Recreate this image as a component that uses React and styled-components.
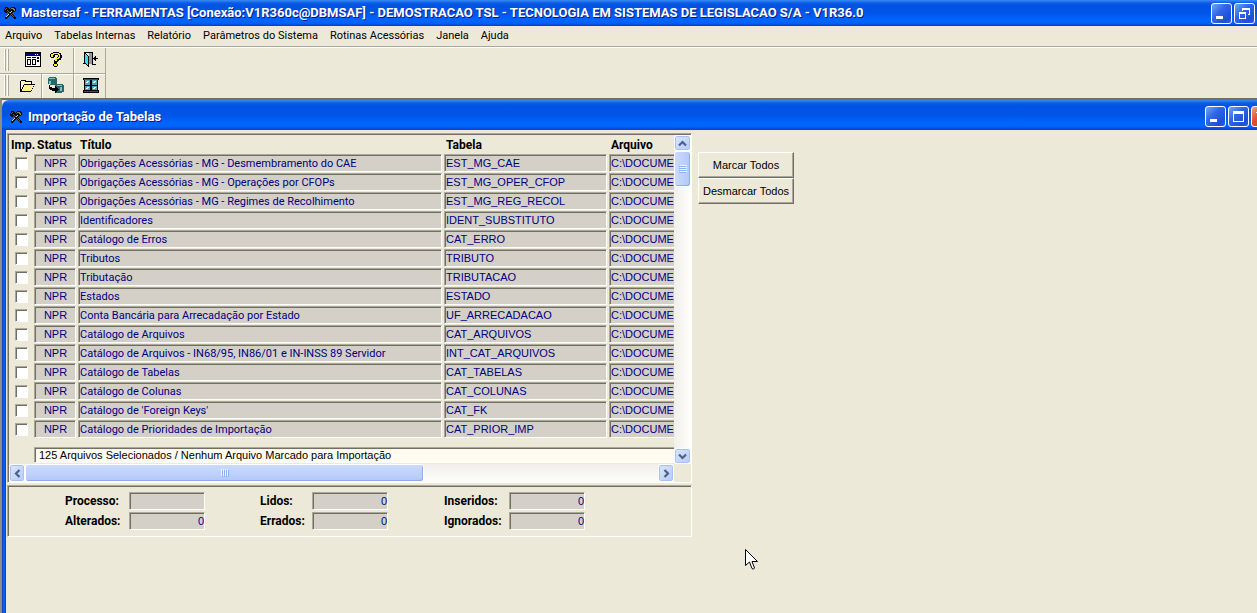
import React, { useState } from 'react';
import styled, { createGlobalStyle } from 'styled-components';

const GlobalStyle = createGlobalStyle`
    * {
        box-sizing: border-box;
    }
    body {
        margin: 0;
        background-color: #ece9d8;
        font-family: "Liberation Sans", Arial, sans-serif;
        font-size: 11px;
        color: #000;
    }
    button, input {
        font: inherit;
        color: inherit;
    }
`;

const Page = styled.div`
    min-height: 100vh;
    display: flex;
    flex-direction: column;
    overflow: hidden;
    position: relative;
    background-color: #ece9d8;
`;

const TitleBar = styled.header`
    height: ${(p) => (p.$child ? '30px' : '26px')};
    display: flex;
    align-items: center;
    gap: ${(p) => (p.$child ? '5px' : '4px')};
    padding: ${(p) => (p.$child ? '3px 5px 0 7px' : '0 2px 0 3px')};
    background: linear-gradient(
        180deg,
        #3a8cf5 0,
        #0a5be8 3px,
        #0053e1 6px,
        #0055e8 50%,
        #0066ff 80%,
        #0060f5 90%,
        #003ecb 100%
    );
    border-radius: ${(p) => (p.$child ? '7px 7px 0 0' : '0')};
`;

const TitleText = styled.h1`
    flex: 1;
    margin: 0;
    font-family: Roboto, sans-serif;
    font-size: 13px;
    line-height: 18px;
    font-weight: 700;
    color: #fff;
    white-space: nowrap;
    text-shadow: 1px 1px 0 #0a1883;
`;

const CaptionButtons = styled.div`
    display: flex;
    gap: 2px;
`;

const CaptionButton = styled.button`
    width: 21px;
    height: 21px;
    padding: 0;
    border: 1px solid #fff;
    border-radius: 3px;
    background: ${(p) =>
        p.$close
            ? 'linear-gradient(135deg, #f0a088, #e0532f 40%, #c63a15)'
            : 'linear-gradient(135deg, #7aa4f5, #3067e6 40%, #1c4fd8 80%, #2a62ea)'};
    display: flex;
    align-items: center;
    justify-content: center;
`;

const MenuBar = styled.nav`
    height: 22px;
    display: flex;
    gap: 12px;
    padding-left: 5px;
    border-bottom: 1px solid #fff;
    box-shadow: inset 0 -1px 0 #aca899;
`;

const MenuItem = styled.a`
    font-family: Roboto, sans-serif;
    font-size: 11px;
    line-height: 20px;
    color: #000;
    text-decoration: none;
    white-space: nowrap;
`;

const Toolbars = styled.div`
    align-self: flex-start;
    width: 106px;
    border-right: 1px solid #aca899;
`;

const Toolbar = styled.div`
    height: 25px;
    display: flex;
    padding-left: 4px;
    & + & {
        border-top: 1px solid #aca899;
        box-shadow: inset 0 1px 0 #fff;
    }
`;

const Handle = styled.div`
    width: 5px;
    margin: 1px 0 2px;
    background: linear-gradient(
        90deg,
        #fff 1px,
        #aca899 1px 2px,
        transparent 2px 3px,
        #fff 3px 4px,
        #aca899 4px
    );
`;

const ToolGroup = styled.div`
    flex: ${(p) => (p.$width ? `0 0 ${p.$width}px` : '1')};
    display: flex;
    align-items: center;
    justify-content: ${(p) => (p.$end ? 'flex-end' : 'center')};
    gap: 9px;
    padding: 0 ${(p) => p.$end || 0}px 2px ${(p) => (p.$end ? 0 : 2)}px;
    & + & {
        border-left: 1px solid #aca899;
        box-shadow: inset 1px 0 0 #fff;
    }
`;

const ToolButton = styled.button`
    padding: 0;
    border: none;
    background: none;
    display: flex;
`;

const ChildWindow = styled.section`
    flex: 1;
    width: calc(100% + 20px);
    display: flex;
    flex-direction: column;
    border-top: 2px solid #716f64;
    border-left: 2px solid #8f8d80;
`;

const ChildBody = styled.div`
    flex: 1;
    display: flex;
    align-items: flex-start;
    gap: 6px;
    padding: 3px 5px 0;
    background: linear-gradient(90deg, #0831a8, #0a5bf0 1px 3px, #0831a8) 0 0 / 4px 100% no-repeat;
`;

const Panels = styled.div`
    flex: 0 1 685px;
    min-width: 0;
    display: flex;
    flex-direction: column;
    gap: 2px;
`;

const Panel = styled.div`
    border: 1px solid;
    border-color: #aca899 #fff #fff #aca899;
    box-shadow: inset 1px 1px 0 #716f64;
`;

const ListPanel = styled(Panel)`
    display: grid;
    grid-template-columns: minmax(0, 1fr) 17px;
    grid-template-rows: 329px 18px;
    padding: 1px 0 0 1px;
`;

const TableArea = styled.div`
    overflow: hidden;
    display: flex;
    flex-direction: column;
`;

const Table = styled.table`
    width: 726px;
    table-layout: fixed;
    border-collapse: collapse;
`;

const Th = styled.th`
    height: 19px;
    padding: 1px 0 0 2px;
    font-family: Roboto, sans-serif;
    font-size: 12px;
    line-height: 16px;
    text-align: left;
    &:nth-child(2) {
        padding-left: 3px;
    }
`;

const Td = styled.td`
    height: 19px;
    padding: 0 2px 1px 0;
`;

const sunken = `
    border: 1px solid;
    border-color: #aca899 #fff #fff #aca899;
    box-shadow: inset 1px 1px 0 #716f64;
`;

const Cell = styled.div`
    ${sunken}
    height: 18px;
    padding: 1px 0 0 1px;
    font-family: ${(p) => (p.$text ? 'Roboto, sans-serif' : 'inherit')};
    line-height: 15px;
    background-color: #d4d0c8;
    color: #000080;
    text-align: ${(p) => (p.$center ? 'center' : 'left')};
    white-space: nowrap;
    overflow: hidden;
`;

const Check = styled.input`
    ${sunken}
    appearance: none;
    display: block;
    width: 13px;
    height: 13px;
    margin: 0 0 0 6px;
    background-color: #fff;
    &:checked {
        background: radial-gradient(#000 3px, #fff 4px);
    }
`;

const Summary = styled.input`
    ${sunken}
    border-right: none;
    height: 16px;
    margin: 8px 0 0 25px;
    padding: 0 4px;
    background-color: #fffbf0;
`;

const Scroll = styled.div`
    display: flex;
    flex-direction: ${(p) => (p.$vertical ? 'column' : 'row')};
    background: linear-gradient(${(p) => (p.$vertical ? '90deg' : '180deg')}, #f0efea, #fefefb);
`;

const ScrollButton = styled.button`
    flex: 0 0 16px;
    padding: 0;
    border: 1px solid #fff;
    border-radius: 3px;
    background: linear-gradient(135deg, #dce7ff, #b4caf8);
    box-shadow: inset 0 0 0 1px #a9c1f2;
    display: flex;
    align-items: center;
    justify-content: center;
`;

const Thumb = styled.div`
    flex: 0 0 ${(p) => p.$size};
    border: 1px solid #fff;
    border-radius: 3px;
    background: linear-gradient(${(p) => (p.$vertical ? '90deg' : '180deg')}, #cbdafd, #bdd0fc 60%, #b2c7f7);
    box-shadow: inset -1px -1px 0 #8eaee5;
    display: flex;
    align-items: center;
    justify-content: center;
`;

const Track = styled.div`
    flex: 1;
`;

const StatsPanel = styled(Panel)`
    height: 52px;
    display: grid;
    grid-template-columns: 183px 172px 172px;
    column-gap: 12px;
    row-gap: 2px;
    align-content: start;
    padding: 6px 0 0 57px;
`;

const Stat = styled.div`
    height: 18px;
    display: flex;
    align-items: center;
`;

const StatLabel = styled.label`
    flex: 0 0 ${(p) => p.$width}px;
    font-family: Roboto, sans-serif;
    font-size: 12px;
    font-weight: 700;
`;

const StatInput = styled.input`
    ${sunken}
    width: 76px;
    height: 18px;
    padding: 0;
    background-color: #d4d0c8;
    color: #000080;
    text-align: right;
`;

const Actions = styled.div`
    display: flex;
    flex-direction: column;
    padding-top: 19px;
`;

const ActionButton = styled.button`
    width: 96px;
    height: 26px;
    padding: 0;
    border: 1px solid;
    border-color: #fff #716f64 #716f64 #fff;
    box-shadow: inset -1px -1px 0 #aca899;
    background-color: #ece9d8;
    white-space: nowrap;
`;

const Cursor = styled.svg`
    position: absolute;
    left: 745px;
    top: 549px;
    pointer-events: none;
`;

const Svg = ({ w = 16, h = 16, children }) => (
    <svg width={w} height={h} viewBox={`0 0 ${w} ${h}`} shapeRendering="crispEdges" aria-hidden="true">
        {children}
    </svg>
);

const ToolsIcon = () => (
    <Svg w={14} h={14}>
        <path d="M2 1h3v1h1v1h1v1h1v-1h-1v-1h1v-1h4v1h1v3h-1v1h-2v1h-1v1h1v1h1v1h1v1h1v2h-2v-1h-1v-1h-1v-1h-1v-1h-1v1h-1v1h-1v1h-1v1h-2v-2h1v-1h1v-1h1v-1h1v-1h-1v-1h-1v1h-2v-1h-1v-3h1z" fill="#0c0c14" />
        <path d="M2 3h1v1h-1zM3 2h1v1h-1zM4 4h1v1h-1z" fill="#8a5230" />
        <path d="M8 2h3v1h-3zM10 3h2v2h-1v-1h-1z" fill="#8c8a3a" />
        <path d="M8 5h1v1h-1zM7 6h1v1h-1zM5 8h1v1h-1zM4 9h1v1h-1zM3 10h1v1h-1z" fill="#d8d4c8" />
        <path d="M5 5h1v1h-1zM6 6h1v1h-1zM8 8h1v1h-1zM9 9h1v1h-1zM10 10h1v1h-1z" fill="#b8452c" />
    </Svg>
);

const FormIcon = () => (
    <Svg h={15}>
        <rect width="16" height="15" fill="#000" />
        <rect x="1" y="1" width="14" height="3" fill="#000080" />
        <path d="M10 2h1v1h-1zM12 2h1v1h-1z" fill="#fff" />
        <rect x="1" y="4" width="14" height="10" fill="#fff" />
        <path d="M2 5h4v1h-4zM7 5h4v1h-4zM12 5h2v2h-2zM12 8h2v2h-2z" fill="#000" />
        <path d="M2 7h4v6h-4zM7 7h4v6h-4z" fill="#000" />
        <path d="M3 8h2v4h-2zM8 8h2v4h-2z" fill="#fff" />
    </Svg>
);

const HelpIcon = () => (
    <Svg w={12} h={15}>
        <path d="M3 0h6v1h2v2h1v3h-1v2h-2v1h-1v1h-1v1h-3v-3h1v-1h1v-1h1v-1h1v-2h-3v2h-1v1h-3v-1h-1v-3h1v-1h2zM4 11h3v1h1v2h-1v1h-3v-1h-1v-2h1z" fill="#000" />
        <path d="M3 1h6v1h1v4h-1v1h-2v2h-2v-2h1v-1h2v-1h1v-2h-1v-1h-4v1h-1v2h-2v-3h1zM4 12h3v2h-3z" fill="#ffef20" />
    </Svg>
);

const ExitIcon = () => (
    <Svg h={15}>
        <path d="M0 11h2v1h-2zM1 0h9v12h3v1h-4v-12h-7v11h-1z" fill="#000" />
        <path d="M6 1h3v11h-3z" fill="#999" />
        <path d="M2 1h1v1h1v1h1v1h1v11h-1v-1h-1v-1h-1v-1h-1z" fill="#000" />
        <path d="M2 2h1v1h1v1h1v9h-1v-1h-1v-1h-1z" fill="#30e0e8" />
        <path d="M10 6h1v-1h1v-1h1v2h2v1h-2v2h-1v-1h-1v-1h-1z" fill="#000" />
    </Svg>
);

const FolderIcon = () => (
    <Svg h={13}>
        <path d="M1 1h5v1h6v3h3v1h-1v2h-1v2h-1v2h-1v1h-11v-11h1z" fill="#000" />
        <path d="M1 2h4v1h6v2h-7v1h-1v2h-1v2h-1z" fill="#fffbc0" />
        <path d="M4 6h10v1h-1v2h-1v2h-1v1h-9v-2h1v-2h1z" fill="#fff38a" />
    </Svg>
);

const DatabaseIcon = () => (
    <Svg h={16}>
        <path d="M1 0h7v1h1v6h-1v1h-6v-1h-2v-6h1z" fill="#26686b" />
        <path d="M1 1h6v1h-6zM1 4h2v3h-2z" fill="#7fc0bf" />
        <path d="M8 7h7v1h1v7h-2v1h-6v-1h-1v-7h1z" fill="#26686b" />
        <path d="M9 8h5v1h-5zM12 10h2v4h-2z" fill="#7fc0bf" />
        <path d="M1 8h1v2h2v1h3v-2h1v1h1v1h1v1h1v1h-1v1h-1v1h-1v1h-1v-2h-3v-1h-2v-1h-1z" fill="#000" />
    </Svg>
);

const WindowIcon = () => (
    <Svg w={16} h={15}>
        <path d="M0 0h16v2h-1v10h1v3h-16v-3h1v-10h-1z" fill="#000" />
        <path d="M1 1h14v1h-14zM1 13h14v1h-14z" fill="#1f5a66" />
        <path d="M2 2h5v5h-5zM9 2h5v5h-5zM2 8h5v4h-5zM9 8h5v4h-5z" fill="#4aa6bb" />
        <path d="M4 3h2v1h-1v1h-2v-1h1zM11 3h2v1h-1v1h-2v-1h1zM4 9h2v1h-1v1h-2v-1h1zM11 9h2v1h-1v1h-2v-1h1z" fill="#e4f8fc" />
    </Svg>
);

const MinimizeIcon = () => (
    <Svg w={13} h={13}>
        <path d="M1 9h7v3h-7z" fill="#fff" />
    </Svg>
);

const RestoreIcon = () => (
    <Svg w={13} h={13}>
        <path d="M4 1h8v7h-2v-1h1v-4h-6v1h-1zM1 5h7v7h-7zM2 7v4h5v-4z" fill="#fff" fillRule="evenodd" />
    </Svg>
);

const MaximizeIcon = () => (
    <Svg w={13} h={13}>
        <path d="M1 1h11v11h-11zM2 4v7h9v-7z" fill="#fff" fillRule="evenodd" />
    </Svg>
);

const CloseIcon = () => (
    <Svg w={13} h={13}>
        <path d="M2 2L11 11M11 2L2 11" stroke="#fff" strokeWidth="2" />
    </Svg>
);

const arrowTurn = { up: 0, right: 90, down: 180, left: 270 };

const Arrow = ({ to }) => (
    <svg width="9" height="9" viewBox="0 0 9 9" aria-hidden="true">
        <path
            d="M1 6.500L4.500 3L8 6.500"
            fill="none"
            stroke="#4d6185"
            strokeWidth="2.200"
            transform={`rotate(${arrowTurn[to]} 4.500 4.500)`}
        />
    </svg>
);

const Grip = ({ vertical }) => (
    <Svg w={8} h={8}>
        <g transform={vertical ? 'rotate(90 4 4)' : undefined}>
            <path d="M0 0h1v7h-1zM2 0h1v7h-1zM4 0h1v7h-1zM6 0h1v7h-1z" fill="#eef4fe" />
            <path d="M1 1h1v7h-1zM3 1h1v7h-1zM5 1h1v7h-1zM7 1h1v7h-1z" fill="#8cb0f8" />
        </g>
    </Svg>
);

const menus = [
    'Arquivo',
    'Tabelas Internas',
    'Relatório',
    'Parâmetros do Sistema',
    'Rotinas Acessórias',
    'Janela',
    'Ajuda',
];

const rows = [
    ['Obrigações Acessórias - MG - Desmembramento do CAE', 'EST_MG_CAE'],
    ['Obrigações Acessórias - MG - Operações por CFOPs', 'EST_MG_OPER_CFOP'],
    ['Obrigações Acessórias - MG - Regimes de Recolhimento', 'EST_MG_REG_RECOL'],
    ['Identificadores', 'IDENT_SUBSTITUTO'],
    ['Catálogo de Erros', 'CAT_ERRO'],
    ['Tributos', 'TRIBUTO'],
    ['Tributação', 'TRIBUTACAO'],
    ['Estados', 'ESTADO'],
    ['Conta Bancária para Arrecadação por Estado', 'UF_ARRECADACAO'],
    ['Catálogo de Arquivos', 'CAT_ARQUIVOS'],
    ['Catálogo de Arquivos - IN68/95, IN86/01 e IN-INSS 89 Servidor', 'INT_CAT_ARQUIVOS'],
    ['Catálogo de Tabelas', 'CAT_TABELAS'],
    ['Catálogo de Colunas', 'CAT_COLUNAS'],
    ["Catálogo de 'Foreign Keys'", 'CAT_FK'],
    ['Catálogo de Prioridades de Importação', 'CAT_PRIOR_IMP'],
];

const stats = [
    { id: 'processo', label: 'Processo:', value: '', width: 64 },
    { id: 'lidos', label: 'Lidos:', value: '0', width: 52 },
    { id: 'inseridos', label: 'Inseridos:', value: '0', width: 65 },
    { id: 'alterados', label: 'Alterados:', value: '0', width: 64 },
    { id: 'errados', label: 'Errados:', value: '0', width: 52 },
    { id: 'ignorados', label: 'Ignorados:', value: '0', width: 65 },
];

const App = () => {
    const [marked, setMarked] = useState(rows.map(() => false));

    const toggle = (index) => {
        setMarked(marked.map((m, i) => (i === index ? !m : m)));
    };

    return (
        <Page>
            <GlobalStyle />
            <TitleBar>
                <ToolsIcon />
                <TitleText>
                    Mastersaf - FERRAMENTAS [Conexão:V1R360c@DBMSAF] - DEMOSTRACAO TSL - TECNOLOGIA EM SISTEMAS DE LEGISLACAO S/A - V1R36.0
                </TitleText>
                <CaptionButtons>
                    <CaptionButton aria-label="Minimizar"><MinimizeIcon /></CaptionButton>
                    <CaptionButton aria-label="Restaurar"><RestoreIcon /></CaptionButton>
                </CaptionButtons>
            </TitleBar>
            <MenuBar>
                {menus.map((item) => (
                    <MenuItem href="#" key={item}>{item}</MenuItem>
                ))}
            </MenuBar>
            <Toolbars>
                <Toolbar>
                    <Handle />
                    <ToolGroup $width={64} $end={11}>
                        <ToolButton aria-label="Formulário"><FormIcon /></ToolButton>
                        <ToolButton aria-label="Ajuda"><HelpIcon /></ToolButton>
                    </ToolGroup>
                    <ToolGroup>
                        <ToolButton aria-label="Sair"><ExitIcon /></ToolButton>
                    </ToolGroup>
                </Toolbar>
                <Toolbar>
                    <Handle />
                    <ToolGroup $width={32} $end={5}>
                        <ToolButton aria-label="Abrir"><FolderIcon /></ToolButton>
                    </ToolGroup>
                    <ToolGroup $width={32} $end={9}>
                        <ToolButton aria-label="Importar"><DatabaseIcon /></ToolButton>
                    </ToolGroup>
                    <ToolGroup>
                        <ToolButton aria-label="Janela"><WindowIcon /></ToolButton>
                    </ToolGroup>
                </Toolbar>
            </Toolbars>
            <ChildWindow>
                <TitleBar $child>
                    <ToolsIcon />
                    <TitleText as="h2">Importação de Tabelas</TitleText>
                    <CaptionButtons>
                        <CaptionButton aria-label="Minimizar"><MinimizeIcon /></CaptionButton>
                        <CaptionButton aria-label="Maximizar"><MaximizeIcon /></CaptionButton>
                        <CaptionButton aria-label="Fechar" $close><CloseIcon /></CaptionButton>
                    </CaptionButtons>
                </TitleBar>
                <ChildBody>
                    <Panels>
                        <ListPanel>
                            <TableArea>
                                <Table>
                                    <colgroup>
                                        <col style={{ width: 25 }} />
                                        <col style={{ width: 44 }} />
                                        <col style={{ width: 366 }} />
                                        <col style={{ width: 165 }} />
                                        <col />
                                    </colgroup>
                                    <thead>
                                        <tr>
                                            <Th>Imp.</Th>
                                            <Th>Status</Th>
                                            <Th>Título</Th>
                                            <Th>Tabela</Th>
                                            <Th>Arquivo</Th>
                                        </tr>
                                    </thead>
                                    <tbody>
                                        {rows.map(([titulo, tabela], index) => (
                                            <tr key={tabela}>
                                                <Td>
                                                    <Check
                                                        type="checkbox"
                                                        aria-label={titulo}
                                                        checked={marked[index]}
                                                        onChange={() => toggle(index)}
                                                    />
                                                </Td>
                                                <Td><Cell $center>NPR</Cell></Td>
                                                <Td><Cell $text>{titulo}</Cell></Td>
                                                <Td><Cell>{tabela}</Cell></Td>
                                                <Td><Cell>C:\DOCUME</Cell></Td>
                                            </tr>
                                        ))}
                                    </tbody>
                                </Table>
                                <Summary
                                    readOnly
                                    aria-label="Resumo"
                                    value="125 Arquivos Selecionados / Nenhum Arquivo Marcado para Importação"
                                />
                            </TableArea>
                            <Scroll $vertical>
                                <ScrollButton aria-label="Subir"><Arrow to="up" /></ScrollButton>
                                <Thumb $vertical $size="36px"><Grip vertical /></Thumb>
                                <Track />
                                <ScrollButton aria-label="Descer"><Arrow to="down" /></ScrollButton>
                            </Scroll>
                            <Scroll>
                                <ScrollButton aria-label="Esquerda"><Arrow to="left" /></ScrollButton>
                                <Thumb $size="60%"><Grip /></Thumb>
                                <Track />
                                <ScrollButton aria-label="Direita"><Arrow to="right" /></ScrollButton>
                            </Scroll>
                        </ListPanel>
                        <StatsPanel>
                            {stats.map((s) => (
                                <Stat key={s.id}>
                                    <StatLabel htmlFor={s.id} $width={s.width}>{s.label}</StatLabel>
                                    <StatInput id={s.id} readOnly value={s.value} />
                                </Stat>
                            ))}
                        </StatsPanel>
                    </Panels>
                    <Actions>
                        <ActionButton onClick={() => setMarked(rows.map(() => true))}>Marcar Todos</ActionButton>
                        <ActionButton onClick={() => setMarked(rows.map(() => false))}>Desmarcar Todos</ActionButton>
                    </Actions>
                </ChildBody>
            </ChildWindow>
            <Cursor width="13" height="21" viewBox="0 0 13 21" aria-hidden="true">
                <path d="M0.500 0.500V16.500L4.500 13L7 19.500Q8.500 21 9.500 19L7 12.500H12.500Z" fill="#fff" stroke="#000" />
            </Cursor>
        </Page>
    );
};

export default App;
